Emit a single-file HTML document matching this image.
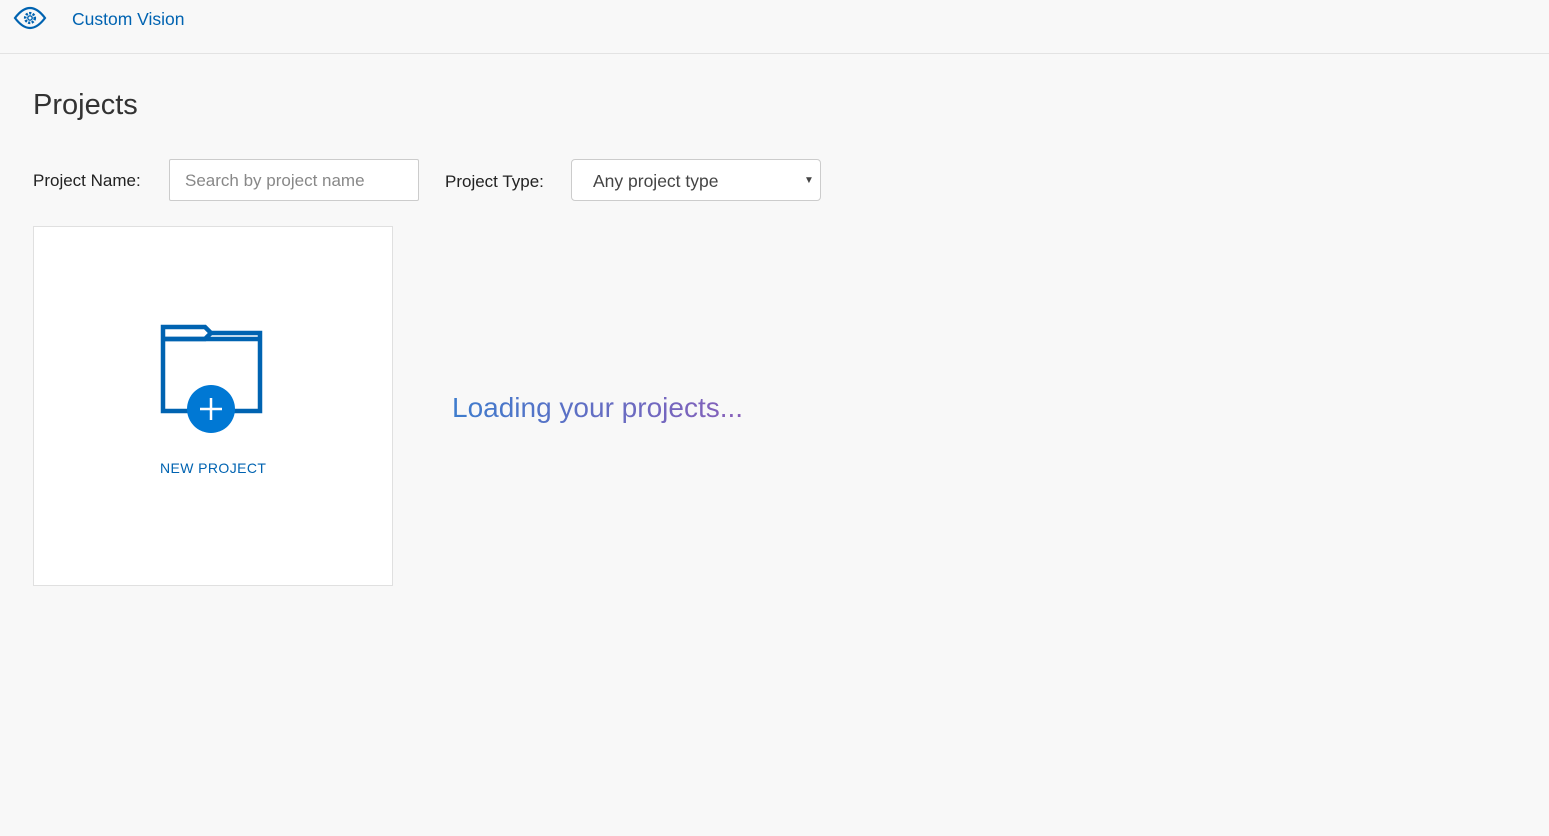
<!DOCTYPE html>
<html><head><style>
body{margin:0;width:1549px;height:836px;background:#f8f8f8;font-family:"Liberation Sans",sans-serif;position:relative;overflow:hidden}
.hdr{position:absolute;left:0;top:0;width:1549px;height:53px;border-bottom:1px solid #e3e3e3}
.t{position:absolute;white-space:nowrap}
.box{position:absolute;background:#fff;border:1px solid #ccc;box-sizing:border-box}
.load{background:linear-gradient(90deg,#2a6fc9,#7c4fb3);-webkit-background-clip:text;background-clip:text;color:transparent;opacity:.9}
</style></head><body>
<div class="hdr"></div>
<svg class="t" style="left:13px;top:6px" width="34" height="24" viewBox="0 0 34 24">
<path d="M2 12 Q17 -8 32 12 Q17 32 2 12Z" fill="none" stroke="#0063b1" stroke-width="2.2"/>
<circle cx="17" cy="12" r="4.8" fill="none" stroke="#0063b1" stroke-width="2.6" stroke-dasharray="2.2 1.4"/>
<circle cx="17" cy="12" r="2.2" fill="none" stroke="#0063b1" stroke-width="1.4"/>
</svg>
<div class="t" style="left:72px;top:9px;font-size:17.5px;color:#0063b1">Custom Vision</div>
<div class="t" style="left:33px;top:89px;font-size:29px;color:#333">Projects</div>
<div class="t" style="left:33px;top:171px;font-size:17px;color:#222">Project Name:</div>
<div class="box" style="left:169px;top:159px;width:250px;height:42px;border-radius:2px"></div>
<div class="t" style="left:185px;top:171px;font-size:17px;color:#888">Search by project name</div>
<div class="t" style="left:445px;top:172px;font-size:17px;color:#222">Project Type:</div>
<div class="box" style="left:571px;top:159px;width:250px;height:42px;border-radius:4px"></div>
<div class="t" style="left:593px;top:171px;font-size:17.5px;color:#444">Any project type</div>
<div class="t" style="left:804px;top:175px;font-size:10px;color:#444">▼</div>
<div class="box" style="left:33px;top:226px;width:360px;height:360px;border-color:#e0e0e0"></div>
<svg class="t" style="left:155px;top:320px" width="115" height="120">
<path d="M8 7 H50 L56 13 L50 19 H8 Z M8 7 V91 H105 V13 H56" fill="none" stroke="#0063b1" stroke-width="4.5"/>
<line x1="8" y1="19" x2="105" y2="19" stroke="#0063b1" stroke-width="4.5"/>
<circle cx="56" cy="89" r="24" fill="#0078d4"/>
<path d="M56 78 V100 M45 89 H67" stroke="#fff" stroke-width="2.5"/>
</svg>
<div class="t" style="left:160px;top:460px;font-size:14px;letter-spacing:0.4px;color:#0063b1">NEW PROJECT</div>
<div class="t load" style="left:452px;top:392px;font-size:28px">Loading your projects...</div>
</body></html>
